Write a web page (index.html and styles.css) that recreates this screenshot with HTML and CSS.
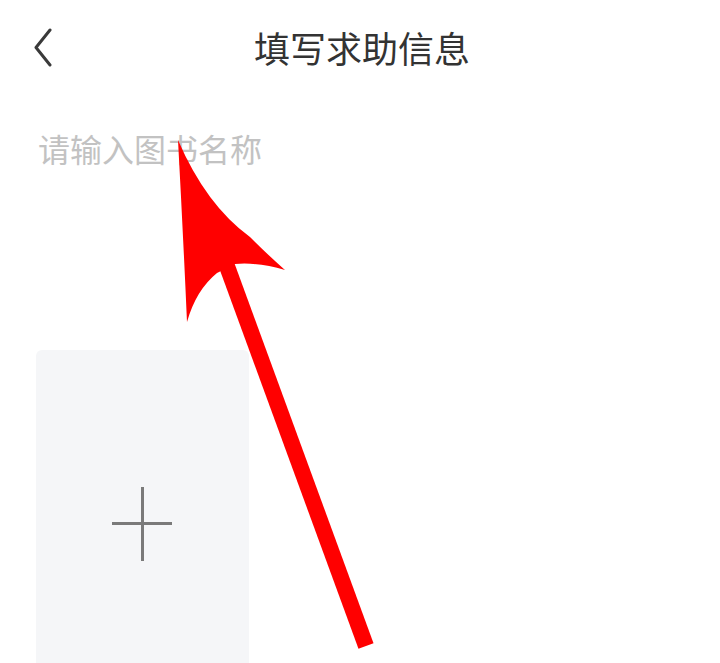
FILE: index.html
```html
<!DOCTYPE html>
<html lang="zh-CN">
<head>
    <meta charset="UTF-8">
    <meta name="viewport" content="width=device-width, initial-scale=1.0">
    <title>填写求助信息</title>
    <link rel="stylesheet" href="styles.css">
</head>
<body>
    <div class="page">
        <header class="top-bar">
            <button class="back-btn" aria-label="返回">
                <svg width="24" height="40" viewBox="0 0 24 40">
                    <polyline points="17,3 3,20.5 17,38" fill="none" stroke="#3a3a3a" stroke-width="3" stroke-linecap="round" stroke-linejoin="round"/>
                </svg>
            </button>
            <h1>填写求助信息</h1>
            <span class="spacer"></span>
        </header>

        <div class="form">
            <input class="book-name" type="text" placeholder="请输入图书名称">
            <div class="upload-box">
                <span class="plus"></span>
            </div>
        </div>

        <!-- annotation arrow drawn over the page -->
        <svg class="arrow" width="720" height="663" viewBox="0 0 720 663">
            <line x1="224" y1="258" x2="366" y2="646" stroke="#ff0000" stroke-width="16"/>
            <path d="M178,140 Q206,205 250,237 Q268,255 285,270 Q258,262 235,264 L217,273 Q196,290 187,322 Q183,232 178,140 Z" fill="#ff0000"/>
        </svg>
    </div>
</body>
</html>
```

FILE: styles.css
```css
* {
    margin: 0;
    padding: 0;
    box-sizing: border-box;
    font-family: "Noto Sans CJK SC", "Noto Sans", sans-serif;
}

body {
    background: #fff;
    overflow: hidden;
}

.page {
    position: relative;
    width: 720px;
    height: 663px;
    overflow: hidden;
}

.top-bar {
    display: grid;
    grid-template-columns: 120px 1fr 120px;
    align-items: center;
    height: 94px;
}

.back-btn {
    border: none;
    background: transparent;
    width: 60px;
    height: 60px;
    padding-left: 33px;
    display: flex;
    align-items: center;
    cursor: pointer;
}

.top-bar h1 {
    text-align: center;
    font-size: 36px;
    font-weight: 400;
    color: #333;
    line-height: 1;
    padding-left: 4px;
}

.form {
    padding-left: 36px;
}

.book-name {
    display: block;
    width: 640px;
    height: 44px;
    margin-top: 32px;
    padding-left: 2px;
    border: none;
    outline: none;
    font-size: 32px;
    color: #333;
    background: transparent;
}

.book-name::placeholder {
    color: #c2c2c2;
}

.upload-box {
    position: relative;
    width: 213px;
    height: 346px;
    margin-top: 180px;
    background: #f5f6f8;
    border-radius: 6px;
}

.plus {
    position: absolute;
    left: 76px;
    top: 137px;
    width: 60px;
    height: 74px;
}

.plus::before,
.plus::after {
    content: '';
    position: absolute;
    background: #7a7a7a;
}

.plus::before {
    left: 0;
    right: 0;
    top: 35px;
    height: 3px;
}

.plus::after {
    top: 0;
    bottom: 0;
    left: 29px;
    width: 3px;
}

.arrow {
    position: absolute;
    top: 0;
    left: 0;
    pointer-events: none;
}
```
